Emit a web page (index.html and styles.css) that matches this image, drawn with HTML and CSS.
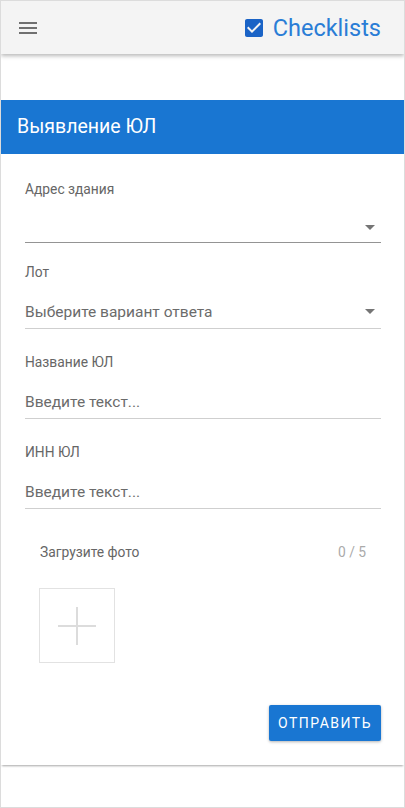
FILE: index.html
```html
<!DOCTYPE html>
<html lang="ru">
<head>
<meta charset="utf-8">
<title>Checklists</title>
<link rel="stylesheet" href="styles.css">
</head>
<body>
<div class="frame">
  <header class="appbar">
    <button class="menu-btn" aria-label="menu">
      <svg width="24" height="24" viewBox="0 0 24 24"><path d="M3 18h18v-2H3v2zm0-5h18v-2H3v2zm0-7v2h18V6H3z" fill="#707070"/></svg>
    </button>
    <div class="brand">
      <svg class="brand-icon" width="24" height="24" viewBox="0 0 24 24"><path d="M19 3H5c-1.11 0-2 .9-2 2v14c0 1.1.89 2 2 2h14c1.11 0 2-.9 2-2V5c0-1.1-.89-2-2-2zm-9 14l-5-5 1.41-1.41L10 14.170l7.59-7.59L19 8l-9 9z" fill="#1a63c6"/></svg>
      <span class="brand-text">Checklists</span>
    </div>
  </header>

  <section class="card">
    <h1 class="card-title">Выявление ЮЛ</h1>
    <form class="form">
      <div class="field field--first">
        <label class="field-label">Адрес здания</label>
        <div class="control control--select control--dark">
          <span class="control-text"></span>
          <span class="caret"></span>
        </div>
      </div>
      <div class="field">
        <label class="field-label">Лот</label>
        <div class="control control--select">
          <span class="control-text">Выберите вариант ответа</span>
          <span class="caret"></span>
        </div>
      </div>
      <div class="field">
        <label class="field-label">Название ЮЛ</label>
        <div class="control">
          <span class="control-text">Введите текст...</span>
        </div>
      </div>
      <div class="field">
        <label class="field-label">ИНН ЮЛ</label>
        <div class="control">
          <span class="control-text">Введите текст...</span>
        </div>
      </div>

      <div class="upload">
        <div class="upload-head">
          <span class="upload-label">Загрузите фото</span>
          <span class="upload-count">0 / 5</span>
        </div>
        <div class="upload-box">
          <svg width="40" height="40" viewBox="0 0 40 40"><path d="M1 20h38M20 1v38" stroke="#dcdcdc" stroke-width="2" fill="none"/></svg>
        </div>
      </div>

      <div class="actions">
        <button type="button" class="submit">ОТПРАВИТЬ</button>
      </div>
    </form>
  </section>
</div>
</body>
</html>
```

FILE: styles.css
```css
* { box-sizing: border-box; }
html, body { margin: 0; padding: 0; }
body {
  font-family: Roboto, "Liberation Sans", Arial, sans-serif;
  background: #fff;
}
.frame {
  height: 808px;
  border: 1px solid #dcdcdc;
  overflow: hidden;
}
.appbar {
  height: 53px;
  background: #f4f4f4;
  display: flex;
  align-items: center;
  justify-content: space-between;
  padding: 0 23px 0 15px;
  box-shadow: 0 2px 4px rgba(0,0,0,0.28);
  position: relative;
}
.menu-btn {
  border: 0;
  background: none;
  padding: 0;
  width: 24px;
  height: 24px;
  display: flex;
}
.brand {
  display: flex;
  align-items: center;
  gap: 7px;
}
.brand-icon { display: block; }
.brand-text {
  font-size: 23.5px;
  color: #2a7dd6;
  line-height: 28px;
}
.card {
  margin-top: 46px;
  box-shadow: 0 2px 2px -1px rgba(0,0,0,0.35);
  padding-bottom: 24px;
}
.card-title {
  margin: 0;
  height: 54px;
  background: #1976d2;
  color: #fff;
  font-weight: 400;
  font-size: 19.5px;
  line-height: 54px;
  padding-left: 16px;
}
.form {
  padding: 27px 23px 0 24px;
}
.field { margin-bottom: 25px; }
.field--first { margin-bottom: 21px; }
.field-label {
  display: block;
  font-size: 13.8px;
  line-height: 16px;
  color: #666;
  margin-bottom: 16px;
}
.control {
  height: 33px;
  border-bottom: 1px solid #cfcfcf;
  display: flex;
  align-items: center;
  justify-content: space-between;
  padding-bottom: 1px;
}
.field--first .control { height: 30px; padding-bottom: 0; }
.control--dark { border-bottom-color: #949494; }
.control-text {
  font-size: 15.5px;
  color: #6b6b6b;
  line-height: 32px;
}
.caret {
  width: 0;
  height: 0;
  border-left: 5px solid transparent;
  border-right: 5px solid transparent;
  border-top: 5px solid #757575;
  margin-right: 6px;
}
.upload {
  padding: 10px 15px 0 15px;
}
.upload-head {
  display: flex;
  justify-content: space-between;
  align-items: center;
  height: 16px;
}
.upload-label {
  font-size: 13.8px;
  color: #666;
}
.upload-count {
  font-size: 13.8px;
  color: #aaa;
}
.upload-box {
  margin-top: 28px;
  margin-left: -1px;
  width: 76px;
  height: 75px;
  border: 1px solid #e2e2e2;
  display: flex;
  align-items: center;
  justify-content: center;
}
.actions {
  display: flex;
  justify-content: flex-end;
  margin-top: 42px;
}
.submit {
  height: 36px;
  width: 112px;
  background: #1976d2;
  color: #fff;
  border: 0;
  border-radius: 2px;
  font-family: Roboto, "Liberation Sans", Arial, sans-serif;
  font-size: 14px;
  font-weight: 400;
  letter-spacing: 1.5px;
  box-shadow: 0 1px 3px rgba(0,0,0,0.3);
  padding: 0;
}
```
